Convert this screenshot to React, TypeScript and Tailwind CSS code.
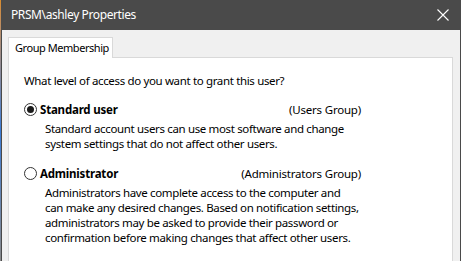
import React from "react";

const font = { fontFamily: '"Noto Sans", "Open Sans", sans-serif' };

function Radio({ checked }: { checked?: boolean }) {
  return (
    <span className="flex h-[13px] w-[13px] shrink-0 items-center justify-center rounded-full border border-[#333333] bg-white">
      {checked && <span className="h-[7px] w-[7px] rounded-full bg-[#1a1a1a]" />}
    </span>
  );
}

function Option({
  label,
  group,
  checked,
  lines,
  className,
}: {
  label: string;
  group: string;
  checked?: boolean;
  lines: string[];
  className?: string;
}) {
  return (
    <div className={className}>
      <div className="flex w-[337px] items-center justify-between leading-[15px]">
        <div className="flex items-center gap-[3px]">
          <Radio checked={checked} />
          <span className="font-bold tracking-[-0.2px] text-[#000000]">{label}</span>
        </div>
        <span className="tracking-[-0.2px]">{group}</span>
      </div>
      <div className="mt-[4px] pl-[21px] leading-[15px]">
        {lines.map((l) => (
          <div key={l} className="whitespace-nowrap">{l}</div>
        ))}
      </div>
    </div>
  );
}

export default function App() {
  return (
    <div
      className="flex h-[261px] w-[461px] overflow-hidden text-[11.5px] tracking-[-0.35px] text-[#000000]"
      style={font}
    >
      <div className="w-px shrink-0 bg-gradient-to-b from-[#d98c2b] via-[#3a7bd5] to-[#8a8a8a]" />
      <div className="flex flex-1 flex-col border-x border-[#4a4a4a]">
        <div className="flex h-[30px] shrink-0 items-center justify-between bg-[#4a4a4a] pl-[9px] pr-[10px] text-[#ffffff]">
          <span className="text-[12px] tracking-[-0.4px]">PRSM\ashley Properties</span>
          <svg width="12" height="12" viewBox="0 0 12 12" className="mr-px">
            <path d="M0.5 0.5 L11.5 11.5 M11.5 0.5 L0.5 11.5" stroke="#ffffff" strokeWidth="1.1" fill="none" />
          </svg>
        </div>
        <div className="flex flex-1 flex-col bg-[#f0f0f0] pl-[6px] pr-[7px] pt-[7px]">
          <div className="flex">
            <div className="relative z-10 -mb-px flex h-[21px] w-[105px] items-center whitespace-nowrap border border-b-0 border-[#d9d9d9] bg-white pl-[6px] text-[11px] tracking-[-0.45px] text-[#000000]">
              Group Membership
            </div>
          </div>
          <div className="flex-1 border border-b-0 border-[#d9d9d9] bg-white pl-[15px] pt-[15px]">
            <div className="leading-[15px]">What level of access do you want to grant this user?</div>
            <Option
              className="mt-[14px]"
              label="Standard user"
              group="(Users Group)"
              checked
              lines={[
                "Standard account users can use most software and change",
                "system settings that do not affect other users.",
              ]}
            />
            <Option
              className="mt-[15px]"
              label="Administrator"
              group="(Administrators Group)"
              lines={[
                "Administrators have complete access to the computer and",
                "can make any desired changes. Based on notification settings,",
                "administrators may be asked to provide their password or",
                "confirmation before making changes that affect other users.",
              ]}
            />
          </div>
        </div>
      </div>
    </div>
  );
}
